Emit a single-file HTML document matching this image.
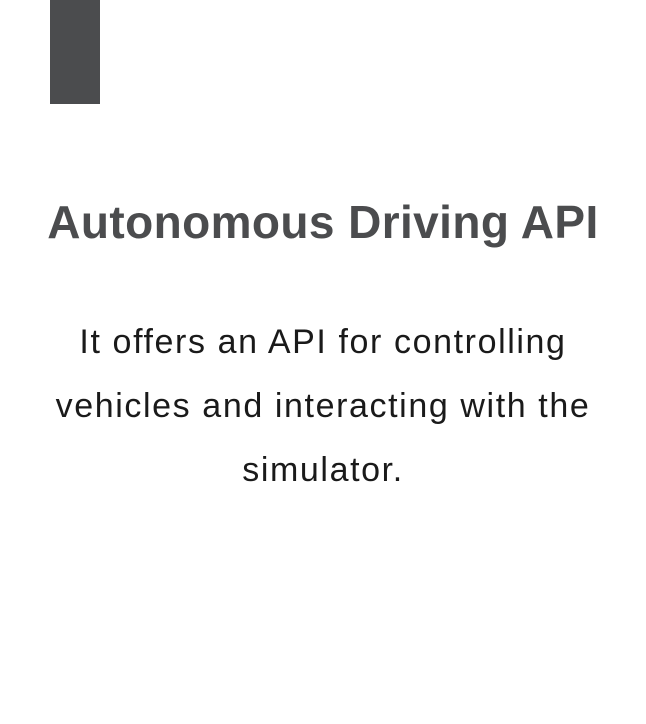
<!DOCTYPE html>
<html><head><style>
html,body{margin:0;padding:0;background:#fff;width:646px;height:724px;overflow:hidden;}
.bar{position:absolute;left:50px;top:0;width:50px;height:104px;background:#4b4c4e;}
h1{position:absolute;left:0;top:194px;width:646px;margin:0;text-align:center;font-family:"Liberation Sans",sans-serif;font-weight:bold;font-size:46px;letter-spacing:0.4px;line-height:56px;color:#4b4c4e;}
p{position:absolute;left:0;top:310px;width:646px;margin:0;text-align:center;font-family:"Liberation Sans",sans-serif;font-size:34px;letter-spacing:1.6px;line-height:64px;color:#1a1a1a;white-space:nowrap;}
</style></head><body>
<div class="bar"></div>
<h1>Autonomous Driving API</h1>
<p>It offers an API for controlling<br>vehicles and interacting with the<br>simulator.</p>
</body></html>
